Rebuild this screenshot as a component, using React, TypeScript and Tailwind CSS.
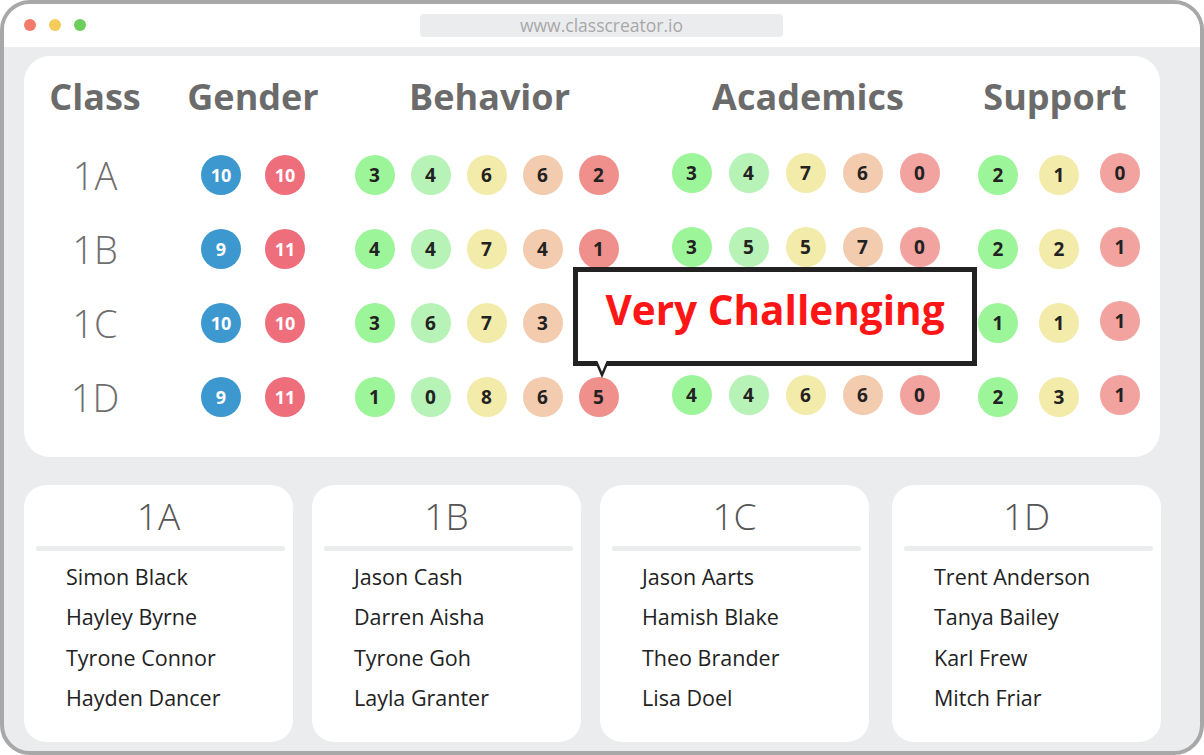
import React from "react";

type Dot = { n: number; c: string; lift?: boolean };

const GREEN = "bg-[#9df59a]";
const LGREEN = "bg-[#b7f3b6]";
const YELLOW = "bg-[#f3eba9]";
const PEACH = "bg-[#f3cbaf]";
const RED = "bg-[#f0908c]";
const PINK = "bg-[#f2a29f]";

const behaviorColors = [GREEN, LGREEN, YELLOW, PEACH, RED];
const academicColors = [GREEN, LGREEN, YELLOW, PEACH, PINK];
const supportColors = [GREEN, YELLOW, PINK];

const rows = [
  { name: "1A", gender: [10, 10], behavior: [3, 4, 6, 6, 2], academics: [3, 4, 7, 6, 0], support: [2, 1, 0] },
  { name: "1B", gender: [9, 11], behavior: [4, 4, 7, 4, 1], academics: [3, 5, 5, 7, 0], support: [2, 2, 1] },
  { name: "1C", gender: [10, 10], behavior: [3, 6, 7, 3, 4], academics: [3, 4, 6, 6, 0], support: [1, 1, 1] },
  { name: "1D", gender: [9, 11], behavior: [1, 0, 8, 6, 5], academics: [4, 4, 6, 6, 0], support: [2, 3, 1] },
];

const classLists = [
  { name: "1A", kids: ["Simon Black", "Hayley Byrne", "Tyrone Connor", "Hayden Dancer"] },
  { name: "1B", kids: ["Jason Cash", "Darren Aisha", "Tyrone Goh", "Layla Granter"] },
  { name: "1C", kids: ["Jason Aarts", "Hamish Blake", "Theo Brander", "Lisa Doel"] },
  { name: "1D", kids: ["Trent Anderson", "Tanya Bailey", "Karl Frew", "Mitch Friar"] },
];

function Circle({ n, c, lift }: Dot) {
  return (
    <div
      className={`w-10 h-10 rounded-full flex items-center justify-center text-[19px] font-bold text-[#222] ${c} ${
        lift ? "-translate-y-[2px]" : ""
      }`}
    >
      {n}
    </div>
  );
}

function GenderCircle({ n, boy }: { n: number; boy: boolean }) {
  return (
    <div
      className={`w-10 h-10 rounded-full flex items-center justify-center text-[18px] font-bold text-white ${
        boy ? "bg-[#3d98d0]" : "bg-[#ef6e7c]"
      }`}
    >
      {n}
    </div>
  );
}

function Tooltip() {
  return (
    <div className="absolute left-[549px] top-[211px] w-[404px] h-[99px] bg-white border-[5px] border-[#222] flex items-center justify-center pb-[12px]">
      <span className="text-[40.5px] font-bold text-[#fe1616]">Very Challenging</span>
      <svg
        className="absolute left-[16px] -bottom-[17px]"
        width="16"
        height="17"
        viewBox="0 0 16 17"
      >
        <path d="M2 0 L8 14 L14 0" fill="white" stroke="#222" strokeWidth="2.5" />
      </svg>
    </div>
  );
}

export default function App() {
  return (
    <div
      className="w-[1204px] h-[755px] bg-white"
      style={{ fontFamily: "'Open Sans', 'Noto Sans', sans-serif" }}
    >
      <div className="w-full h-full border-[4px] border-[#a8a8a8] rounded-[30px] overflow-hidden flex flex-col bg-[#ebecee]">
        {/* title bar */}
        <div className="h-[43px] bg-white flex items-center relative shrink-0">
          <div className="flex gap-[13px] pl-[20px] -mt-[2px]">
            <div className="w-3 h-3 rounded-full bg-[#f47a6b]" />
            <div className="w-3 h-3 rounded-full bg-[#f5cb5c]" />
            <div className="w-3 h-3 rounded-full bg-[#6ccf5c]" />
          </div>
          <div className="absolute left-[416px] top-[10px] w-[363px] h-[23px] rounded-[4px] bg-[#ebecee] flex items-center justify-center text-[17.5px] text-[#a8a8a8]">
            www.classcreator.io
          </div>
        </div>

        <div className="pl-[20px] pt-[9px]">
          {/* summary panel */}
          <div className="relative w-[1136px] h-[401px] bg-white rounded-[26px] pt-[14px]">
            <div className="grid grid-cols-[142px_174px_293px_345px_162px] h-[50px] items-center text-[36px] font-bold text-[#6b6b6b] text-center">
              <div>Class</div>
              <div>Gender</div>
              <div className="pl-[6px]">Behavior</div>
              <div className="pl-[5px]">Academics</div>
              <div className="pr-[8px]">Support</div>
            </div>
            <div className="mt-[18px]">
              {rows.map((r) => (
                <div
                  key={r.name}
                  className="grid grid-cols-[142px_174px_293px_345px_162px] h-[74px] items-center"
                >
                  <div className="text-center text-[38px] font-light text-[#6e6e6e]">{r.name}</div>
                  <div className="flex justify-center gap-[24px]">
                    <GenderCircle n={r.gender[0]} boy />
                    <GenderCircle n={r.gender[1]} boy={false} />
                  </div>
                  <div className="flex justify-center gap-[16px]">
                    {r.behavior.map((n, i) => (
                      <Circle key={i} n={n} c={behaviorColors[i]} />
                    ))}
                  </div>
                  <div className="flex justify-center gap-[17px]">
                    {r.academics.map((n, i) => (
                      <Circle key={i} n={n} c={academicColors[i]} lift />
                    ))}
                  </div>
                  <div className="flex justify-center gap-[21px]">
                    {r.support.map((n, i) => (
                      <Circle key={i} n={n} c={supportColors[i]} lift={i === 2} />
                    ))}
                  </div>
                </div>
              ))}
            </div>
            <Tooltip />
          </div>

          {/* class lists */}
          <div className="flex gap-[19px] mt-[28px]">
            {classLists.map((cl, idx) => (
              <div
                key={cl.name}
                className={`w-[269px] h-[257px] bg-white rounded-[22px] pt-[9px] ${idx === 3 ? "ml-[4px]" : ""}`}
              >
                <div className="text-center text-[37px] leading-[44px] font-light text-[#555]">
                  {cl.name}
                </div>
                <div className="h-[5px] rounded-full bg-[#ebecee] ml-3 mr-2 mt-[8px]" />
                <div className="mt-[6px] pl-[42px]">
                  {cl.kids.map((k) => (
                    <div key={k} className="text-[21.5px] leading-[40.3px] text-[#222]">
                      {k}
                    </div>
                  ))}
                </div>
              </div>
            ))}
          </div>
        </div>
      </div>
    </div>
  );
}
